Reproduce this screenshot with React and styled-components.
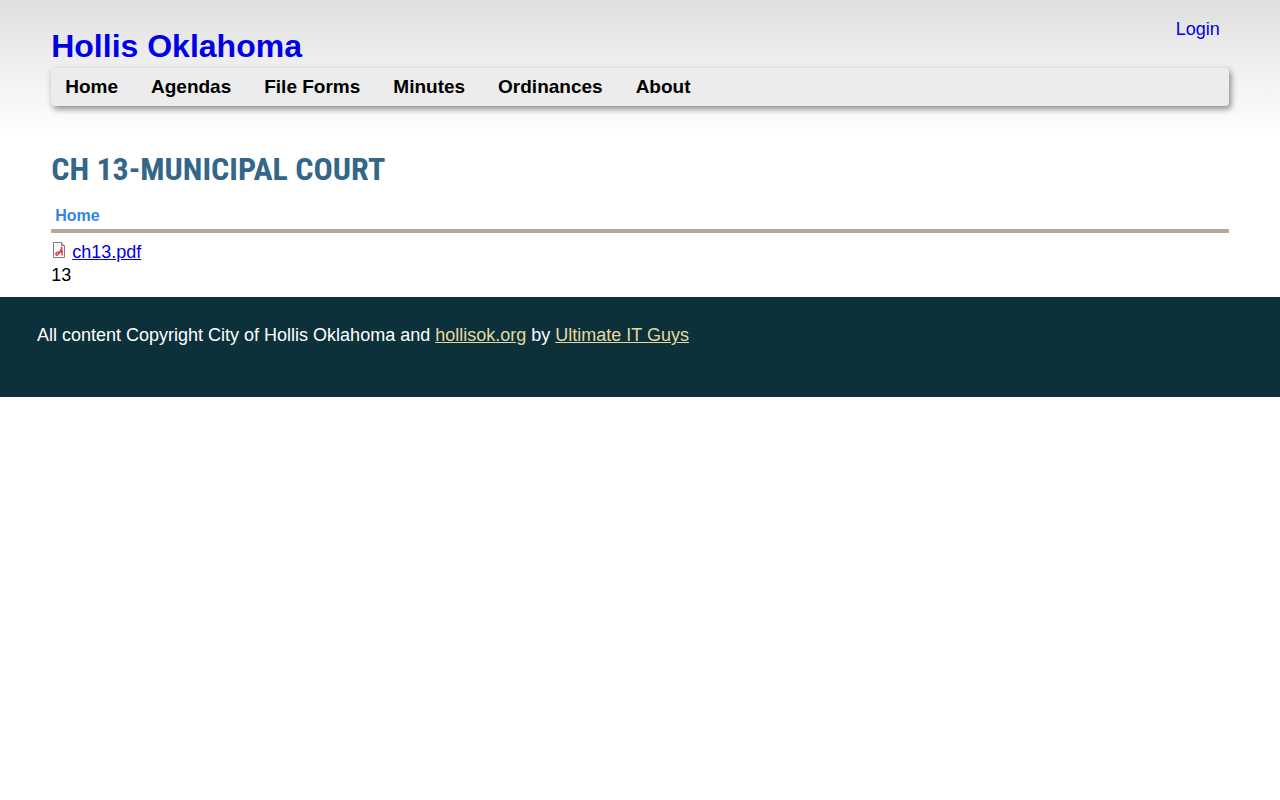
import React from 'react'
import styled, { createGlobalStyle } from 'styled-components'

const GlobalStyle = createGlobalStyle`
    body {
        margin: 0;
        background: #fff;
        color: #000;
        font-family: "Liberation Sans", Arial, sans-serif;
        font-size: 18px;
        line-height: 23px;
    }
`
const Page = styled.div`
    background: linear-gradient(#dfdfdf, #fff 134px);
`
const Header = styled.header`
    padding: 18px 4% 0;
`
const TopRow = styled.div`
    display: flex;
    justify-content: space-between;
    align-items: flex-start;
`
const SiteName = styled.h1`
    margin: 8px 0 2px;
    font-size: 32px;
    line-height: 40px;
`
const PlainLink = styled.a`
    color: #0000e6;
    text-decoration: none;
`
const Login = styled(PlainLink)`
    padding: 0 9px;
`
const Nav = styled.nav`
    display: flex;
    gap: 33px;
    padding: 7px 14px 8px;
    background-color: #ececec;
    border-radius: 4px;
    box-shadow: 2px 3px 6px rgba(0, 0, 0, 0.45);
`
const NavLink = styled.a`
    color: #000;
    font-size: 19px;
    font-weight: 700;
    text-decoration: none;
`
const Main = styled.main`
    padding: 39px 4% 10px;
`
const Title = styled.h2`
    margin: 0;
    color: #336688;
    font-family: "Roboto Condensed", "Arial Narrow", "Liberation Sans", sans-serif;
    font-size: 32px;
    line-height: 48px;
    text-transform: uppercase;
`
const Breadcrumb = styled.nav`
    margin-top: 11px;
    padding: 0 4px 2px;
    border-bottom: 4px solid #b3a995;
`
const Crumb = styled.a`
    color: #3385e5;
    font-size: 16px;
    font-weight: 700;
    text-decoration: none;
`
const FileRow = styled.div`
    display: flex;
    align-items: flex-start;
    gap: 5px;
    margin-top: 8px;
`
const FileLink = styled.a`
    color: #0000e6;
`
const Text = styled.p`
    margin: 0;
`
const Footer = styled.footer`
    min-height: 73px;
    padding: 27px 37px 0;
    background-color: #0d313b;
    color: #fff;

    a {
        color: #e6d9a0;
    }
`

const navItems = ['Home', 'Agendas', 'File Forms', 'Minutes', 'Ordinances', 'About']

const PdfIcon = () => (
    <svg width="16" height="17" viewBox="0 -1 16 17" aria-hidden="true">
        <path d="M2.5.5h8l3 3v12h-11z" fill="#fff" stroke="#7d7d7d" />
        <path d="M10.5.5v3h3" fill="#ddd" stroke="#777" />
        <path d="M4 2.5h5M4 4.5h4" stroke="#dde0e0" />
        <path d="M10.5 4.5c.2 3 .3 6 .8 9M11 5.5C9.5 9 8.5 11.5 6.5 13c-1 .8-2-.8-1.5-1.800 1-1.200 3.500-1.200 7-1.200" fill="none" stroke="#e33d46" strokeWidth="1.5" />
    </svg>
)

const App = () => {
  return (
    <Page>
        <GlobalStyle />
        <Header>
            <TopRow>
                <SiteName><PlainLink href="#home">Hollis Oklahoma</PlainLink></SiteName>
                <Login href="#login">Login</Login>
            </TopRow>
            <Nav>
                {navItems.map(item => (
                    <NavLink key={item} href="#">{item}</NavLink>
                ))}
            </Nav>
        </Header>
        <Main>
            <Title>Ch 13-Municipal Court</Title>
            <Breadcrumb><Crumb href="#home">Home</Crumb></Breadcrumb>
            <FileRow>
                <PdfIcon />
                <FileLink href="#ch13">ch13.pdf</FileLink>
            </FileRow>
            <Text>13</Text>
        </Main>
        <Footer>
            <Text>
                All content Copyright City of Hollis Oklahoma and <a href="#hollisok">hollisok.org</a> by <a href="#ultimate">Ultimate IT Guys</a>
            </Text>
        </Footer>
    </Page>
  )
}

export default App
